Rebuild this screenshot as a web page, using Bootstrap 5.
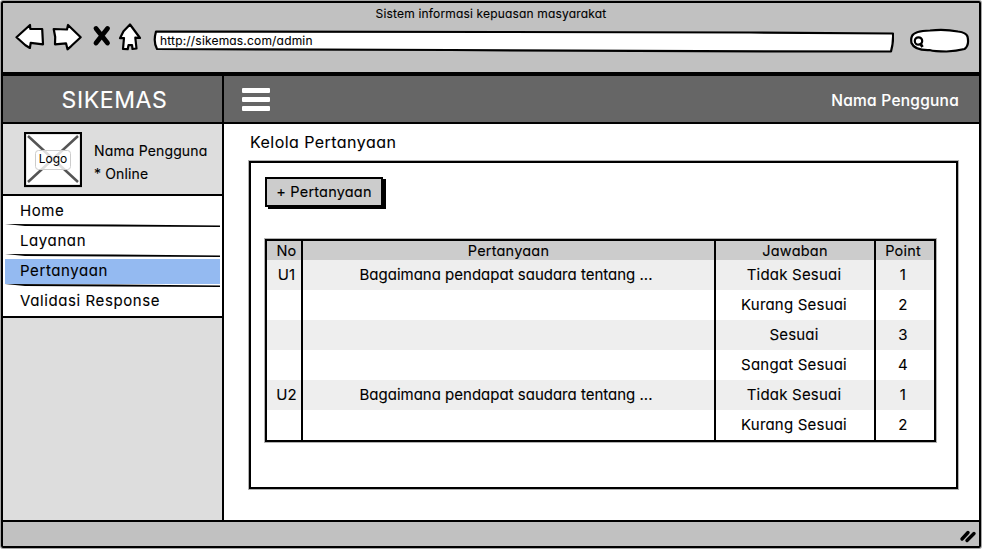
<!DOCTYPE html>
<html lang="id">
<head>
<meta charset="utf-8">
<meta name="viewport" content="width=device-width, initial-scale=1">
<title>Sistem informasi kepuasan masyarakat</title>
<link href="https://cdn.jsdelivr.net/npm/bootstrap@5.3.0/dist/css/bootstrap.min.css" rel="stylesheet">
<style>
body{font-family:Inter,"Open Sans",sans-serif;font-feature-settings:"cv11","calt" 0;font-size:15px;line-height:20px;letter-spacing:.5px;color:#000;background:#fff;overflow:hidden;-webkit-text-stroke:.1px}
.sheet{width:982px;height:549px;padding:1px}
.window{width:980px;height:547px;border:2px solid #000;border-radius:2px;box-shadow:0 0 0 1px rgba(0,0,0,.35)}
.chrome{height:71px;background:#c1c1c1;border-bottom:2px solid #000}
.chrome-title{font-size:12px;line-height:20px;height:18px;padding-top:1px;letter-spacing:.17px}
.tools{padding-left:12px}
.tools svg{display:block;flex:none}
.address{width:741px;height:23px;margin:9px 0 0 11px}
.address-text{left:7px;top:1px;font-size:12px;letter-spacing:.18px}
.search{margin:7px 0 0 15px}
.topbar{height:50px;background:#666;color:#fff;border-top:2px solid #000;border-bottom:2px solid #000}
.brand{width:221px;border-right:2px solid #000;font-size:23px;letter-spacing:.6px;padding:2px 0 0 4px}
.burger{margin:2px 0 0 18px}
.user-name{font-weight:500;font-size:15.5px;letter-spacing:.25px;padding:3px 20px 0 0}
.side{width:221px;background:#ddd;border-right:2px solid #000}
.profile{height:70px;padding:8px 0 0 21px}
.profile-text{padding:7px 0 0 12px;font-size:14px;line-height:23px;letter-spacing:.15px}
.menu{width:221px;height:124px;background:#fff;border:solid #000;border-width:2px 2px 2px 0;padding:0 2px;letter-spacing:.6px}
.menu-item{height:30px;padding:0 0 1px 15px}
.menu-item.current{background:linear-gradient(#94baf1,#94baf1) 0 3px/215px 25px no-repeat}
.menu-line{height:4px;left:0;bottom:-2px}
.main-area{padding:8px 0 0 25px}
.page-title{font-size:16px;letter-spacing:.45px;padding-left:1px}
.panel{width:709px;height:328px;border:2px solid #000;box-shadow:0 0 0 1px rgba(0,0,0,.3);margin-top:9px;padding:14px 0 0 14px}
.add-btn{width:118px;height:30px;background:#ccc;border:2px solid #000;box-shadow:3px 2px 0 #000;font-size:14.5px;letter-spacing:.2px}
.grid-table{width:671px;margin-top:32px;border:2px solid #000;box-shadow:0 0 0 1px rgba(0,0,0,.3);letter-spacing:.2px}
.grid-row{height:30px}
.grid-row>div+div{border-left:2px solid #000}
.grid-row>div{display:flex;align-items:center;justify-content:center}
.grid-row:nth-child(even){background:#eee}
.grid-head{height:19px;background:#ccc;font-size:14.5px}
.c1{width:34px;padding-left:5px}.c2{width:413px;letter-spacing:0;padding-right:5px}.grid-head .c2{padding-right:0;letter-spacing:.2px}.c3{width:160px;padding-right:2px}.grid-head .c3{padding-right:0}.c4{flex:1;padding-right:4px}
.status{height:26px;background:#c1c1c1;border-top:2px solid #000}
</style>
</head>
<body>
<div class="sheet">
<div class="window d-flex flex-column">
  <header class="chrome flex-shrink-0">
    <div class="chrome-title text-center">Sistem informasi kepuasan masyarakat</div>
    <div class="tools d-flex align-items-start">
      <svg width="127" height="32" viewBox="15 21 127 32" fill="#fff" stroke="#000" stroke-width="2.2" stroke-linejoin="round">
        <path d="M16.500 37.300 30 25l.3 4L42.200 29 43 44.300l-12.300-1.500-.8 5.200-4.500-2.800z"/>
        <path d="M80.700 37.300 68 25l-1 4.500-13.300-.5 1.500 8-.2 7.300 11-1 1.500 6 4-3.500z"/>
        <path d="M96 28.500 107.500 43M107.500 28.500 96 43" stroke-width="4.800" stroke-linecap="round"/>
        <path d="M130 24.500 140 38l-4.700-.3L136.500 48.500l-4 .5-.5-4-3.500.2-.8 4-4.700-.2L124 38l-4 .2 3.500-7z"/>
      </svg>
      <div class="address position-relative">
        <svg width="741" height="23" viewBox="153 30 741 23" fill="#fff" stroke="#000" stroke-width="2.200" stroke-linejoin="round"><path d="M156 31.500 500 32l250 .5 143 1q.5 9-2 18L700 51.200 450 50 157 49q-4-7-1-17.500z"/></svg>
        <div class="address-text position-absolute">http://sikemas.com/admin</div>
      </div>
      <svg class="search" width="61" height="26" viewBox="909 28 61 26" fill="#fff" stroke="#000" stroke-width="2.200"><path d="M912 36q2-5 18-5.500 15-1.500 28 1 8 1 9.500 5 2 9-3 12.500-8 2-18 2.500-12 0-17-1.500-15 .5-18-7-.8-4 .5-7z"/><circle cx="918.500" cy="41" r="3.700"/><path d="m920 43 2.500 4" stroke-width="2.800"/></svg>
    </div>
  </header>
  <nav class="topbar d-flex align-items-center flex-shrink-0">
    <div class="brand h-100 d-flex align-items-center justify-content-center flex-shrink-0">SIKEMAS</div>
    <svg class="burger flex-shrink-0" width="28" height="24" viewBox="0 0 28 24" fill="#fff"><rect y="0" width="28" height="5" rx="1"/><rect y="9" width="28" height="5" rx="1"/><rect y="18" width="28" height="5" rx="1"/></svg>
    <div class="user-name ms-auto">Nama Pengguna</div>
  </nav>
  <div class="d-flex flex-grow-1">
    <aside class="side flex-shrink-0">
      <div class="profile d-flex align-items-start">
        <svg width="58" height="56" viewBox="24 132 58 56"><rect x="25" y="133" width="56" height="53" fill="#fff" stroke="#000" stroke-width="2.200"/><path d="M28 136 78 182M78 136 28 182" stroke="#555" stroke-width="2.500"/><rect x="35.500" y="150.500" width="35" height="19" rx="3" fill="#fff" fill-opacity=".8" stroke="#ccc"/><text x="53" y="163" font-size="12" text-anchor="middle" letter-spacing="0">Logo</text></svg>
        <div class="profile-text text-nowrap">Nama Pengguna<br>* Online</div>
      </div>
      <div class="menu">
        <div class="menu-item position-relative d-flex align-items-center">Home<svg class="menu-line position-absolute" width="215" height="4"><path d="M0 0 110 .6 215 1.500v1.500L110 2.500 20 2z"/></svg></div>
        <div class="menu-item position-relative d-flex align-items-center">Layanan<svg class="menu-line position-absolute" width="215" height="4"><path d="M0 0 110 .6 215 1.500v1.500L110 2.500 20 2z"/></svg></div>
        <div class="menu-item current position-relative d-flex align-items-center">Pertanyaan<svg class="menu-line position-absolute" width="215" height="4"><path d="M0 0 110 .6 215 1.500v1.500L110 2.500 20 2z"/></svg></div>
        <div class="menu-item d-flex align-items-center">Validasi Response</div>
      </div>
    </aside>
    <main class="main-area">
      <div class="page-title">Kelola Pertanyaan</div>
      <section class="panel">
        <div class="add-btn d-flex align-items-center justify-content-center">+ Pertanyaan</div>
        <div class="grid-table">
          <div class="grid-row grid-head d-flex"><div class="c1">No</div><div class="c2">Pertanyaan</div><div class="c3">Jawaban</div><div class="c4">Point</div></div>
          <div class="grid-row d-flex"><div class="c1">U1</div><div class="c2">Bagaimana pendapat saudara tentang ...</div><div class="c3">Tidak Sesuai</div><div class="c4">1</div></div>
          <div class="grid-row d-flex"><div class="c1"></div><div class="c2"></div><div class="c3">Kurang Sesuai</div><div class="c4">2</div></div>
          <div class="grid-row d-flex"><div class="c1"></div><div class="c2"></div><div class="c3">Sesuai</div><div class="c4">3</div></div>
          <div class="grid-row d-flex"><div class="c1"></div><div class="c2"></div><div class="c3">Sangat Sesuai</div><div class="c4">4</div></div>
          <div class="grid-row d-flex"><div class="c1">U2</div><div class="c2">Bagaimana pendapat saudara tentang ...</div><div class="c3">Tidak Sesuai</div><div class="c4">1</div></div>
          <div class="grid-row d-flex"><div class="c1"></div><div class="c2"></div><div class="c3">Kurang Sesuai</div><div class="c4">2</div></div>
        </div>
      </section>
    </main>
  </div>
  <footer class="status flex-shrink-0 d-flex justify-content-end">
    <svg width="20" height="24" viewBox="959 523 20 24" stroke="#000" stroke-width="3.400" stroke-linecap="round"><path d="m962 540 6-6.500M967 541.500l7-7"/></svg>
  </footer>
</div>
</div>
<script src="https://cdn.jsdelivr.net/npm/bootstrap@5.3.0/dist/js/bootstrap.bundle.min.js"></script>
</body>
</html>
